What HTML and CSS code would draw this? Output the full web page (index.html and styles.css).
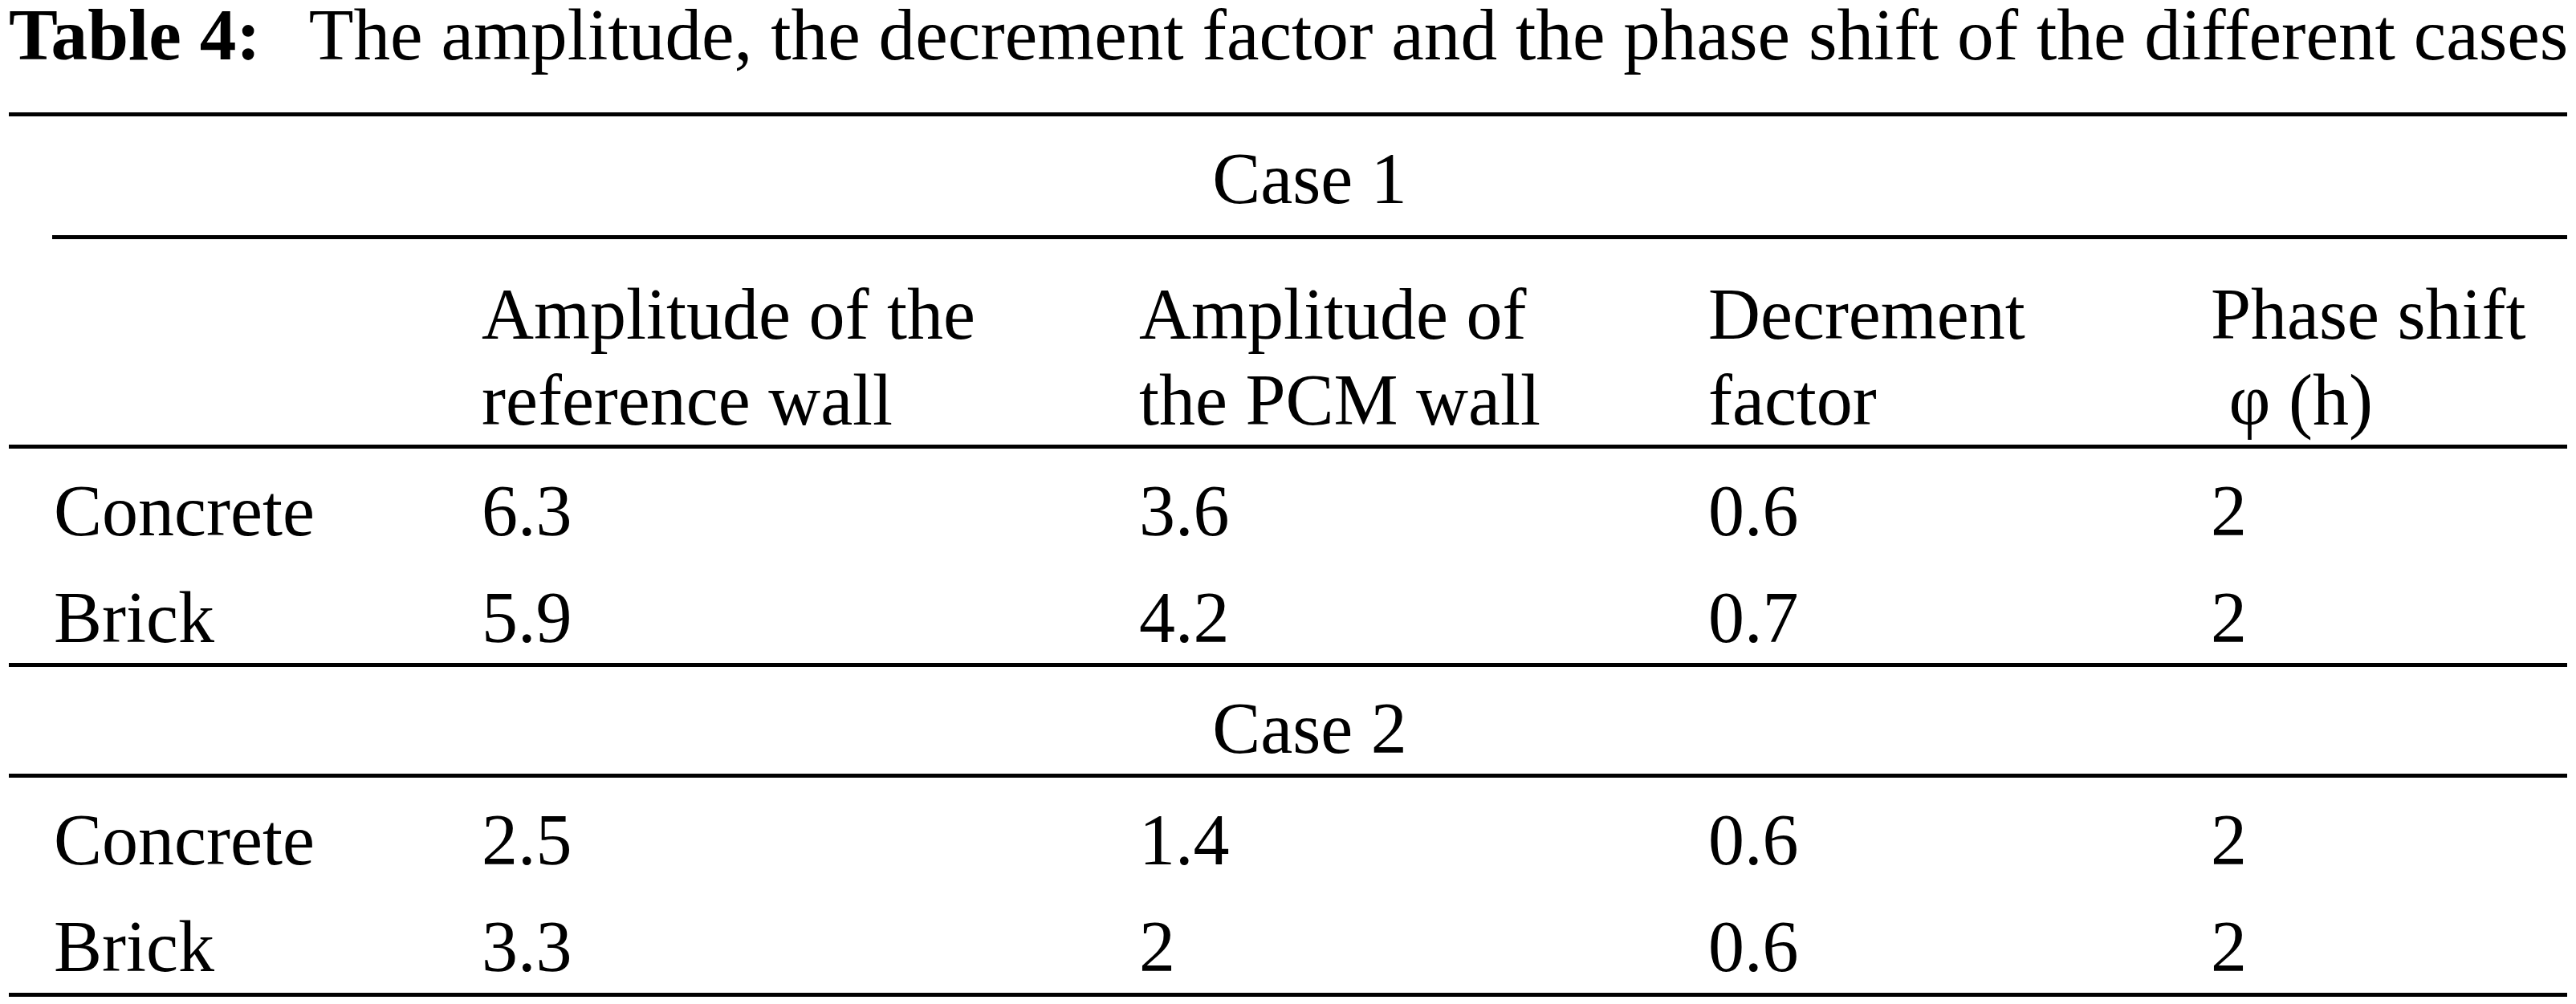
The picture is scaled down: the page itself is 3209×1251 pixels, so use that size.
FILE: index.html
```html
<html>

<head>
    <meta charset="utf-8">
    <title>Table 4</title>
    <link rel="stylesheet" href="styles.css">
</head>
<body>
    <div class="sayfa">
        <div class="baslik"><b class="etiket">Table 4:</b>The amplitude, the decrement factor and the phase shift of the different cases</div>
        <table class="tablo">
            <colgroup>
                <col class="k1">
                <col class="k2">
                <col class="k3">
                <col class="k4">
                <col class="k5">
            </colgroup>
            <tr class="durum durum-ilk">
                <td colspan="5"><div class="durum-ad">Case 1</div></td>
            </tr>
            <tr class="ust">
                <td></td>
                <td>Amplitude of the<br>reference wall</td>
                <td>Amplitude of<br>the PCM wall</td>
                <td>Decrement<br>factor</td>
                <td>Phase shift<br>&nbsp;φ (h)</td>
            </tr>
            <tr class="satir ilk">
                <td>Concrete</td>
                <td>6.3</td>
                <td>3.6</td>
                <td>0.6</td>
                <td>2</td>
            </tr>
            <tr class="satir son">
                <td>Brick</td>
                <td>5.9</td>
                <td>4.2</td>
                <td>0.7</td>
                <td>2</td>
            </tr>
            <tr class="durum durum-iki">
                <td colspan="5"><div class="durum-ad">Case 2</div></td>
            </tr>
            <tr class="satir ilk">
                <td>Concrete</td>
                <td>2.5</td>
                <td>1.4</td>
                <td>0.6</td>
                <td>2</td>
            </tr>
            <tr class="satir son alt">
                <td>Brick</td>
                <td>3.3</td>
                <td>2</td>
                <td>0.6</td>
                <td>2</td>
            </tr>
        </table>
    </div>
</body>

</html>
```
FILE: styles.css
```css
body {
    margin: 0;
    background: #fff;
    color: #000;
    font-family: "Liberation Serif", "Times New Roman", serif;
    font-size: 90px;
}
.sayfa {
    padding-left: 11px;
}
.baslik {
    font-size: 91.3px;
    line-height: 88px;
    margin-bottom: 52px;
    white-space: nowrap;
}
.etiket {
    margin-right: 60px;
}

.tablo {
    font: inherit;
    width: 3187px;
    table-layout: fixed;
    border-collapse: separate;
    border-spacing: 0;
}
.k1 { width: 589px; }
.k2 { width: 819px; }
.k3 { width: 709px; }
.k4 { width: 626px; }
.k5 { width: 444px; }

.tablo td {
    padding: 0;
    line-height: 107px;
    vertical-align: top;
    text-align: left;
    white-space: nowrap;
}
.tablo td:first-child {
    padding-left: 56px;
}

/* case satirlari */
.durum td {
    border-top: 5px solid #000;
    text-align: center;
}
.tablo .durum td:first-child {
    padding-left: 54px;
}
.durum-ilk td {
    padding-top: 24px;
}
.durum-ilk .durum-ad {
    padding-bottom: 17px;
    border-bottom: 5px solid #000;
}
.durum-iki td {
    padding-top: 23px;
    padding-bottom: 3px;
    border-bottom: 5px solid #000;
}

/* baslik satiri */
.ust td {
    padding-top: 40px;
    padding-bottom: 2px;
    border-bottom: 5px solid #000;
}

/* veri satirlari */
.satir td {
    padding-top: 13px;
    padding-bottom: 13px;
}
.satir.ilk td {
    padding-top: 24px;
}
.satir.son td {
    padding-bottom: 3px;
}
.satir.alt td {
    padding-bottom: 4px;
    border-bottom: 5px solid #000;
}
```
